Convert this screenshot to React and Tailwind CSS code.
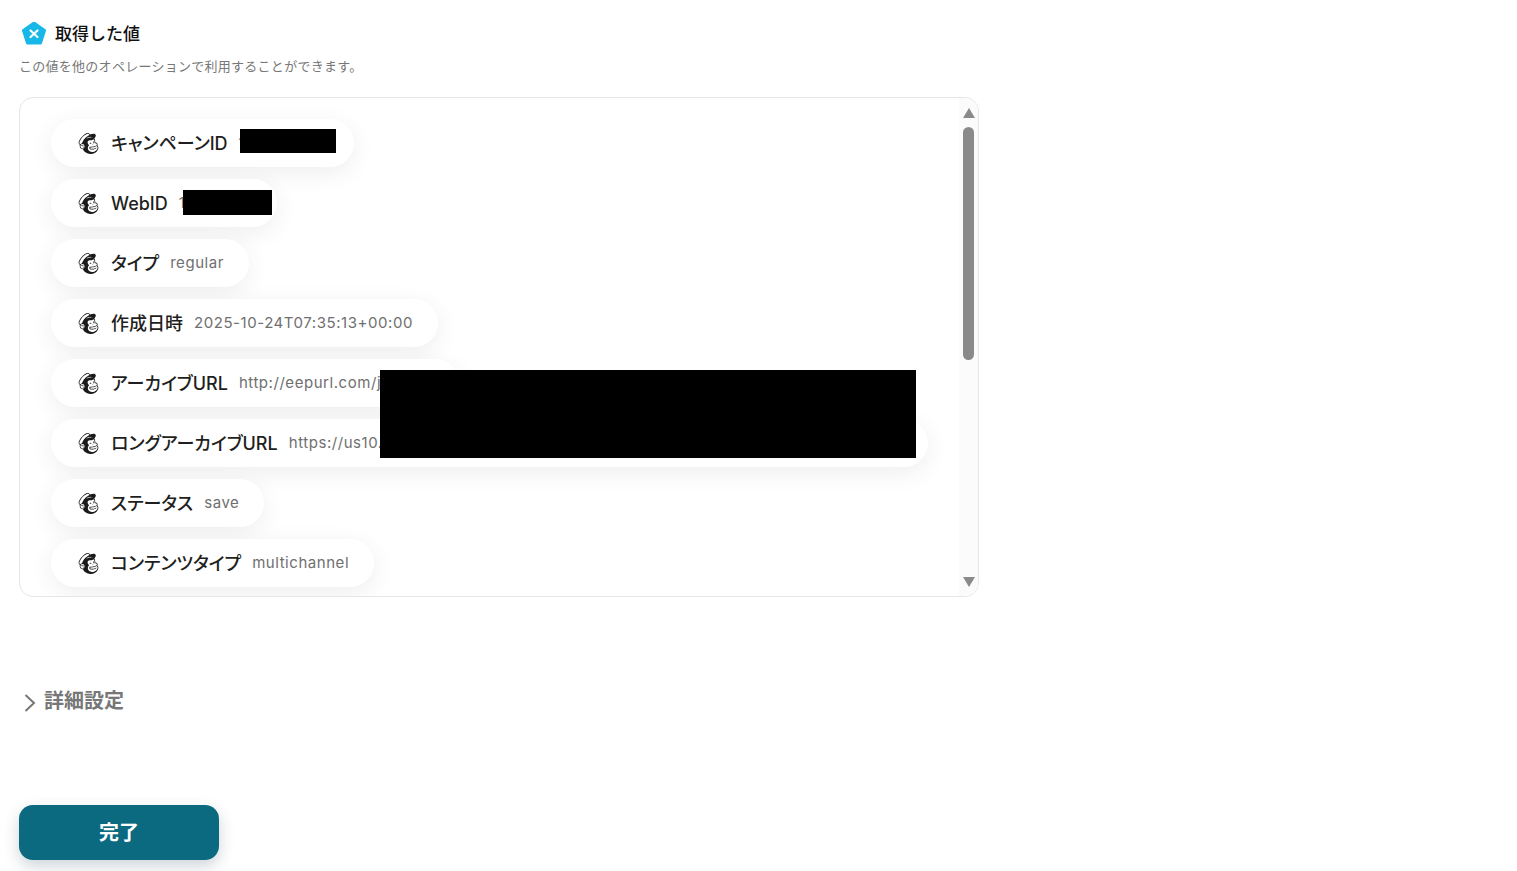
import React from 'react';
import { SiMailchimp } from 'react-icons/si';

const rows = [
  { label: 'キャンペーンID', value: '1001000100' },
  { label: 'WebID', value: '10010000' },
  { label: 'タイプ', value: 'regular' },
  { label: '作成日時', value: '2025-10-24T07:35:13+00:00' },
  { label: 'アーカイブURL', value: 'http://eepurl.com/jxxxxxx' },
  { label: 'ロングアーカイブURL', value: 'https://us10.campaign-archive.com/?u=000000000000000100&id=0000000000' },
  { label: 'ステータス', value: 'save' },
  { label: 'コンテンツタイプ', value: 'multichannel' },
];

const Pill = ({ label, value }) => (
  <div className="flex h-12 w-fit shrink-0 items-center whitespace-nowrap rounded-full bg-white pl-[27px] pr-[25px] shadow-[0_6px_24px_rgba(0,0,0,0.07)]">
    <SiMailchimp className="h-[21px] w-[21px] shrink-0 text-[#1a1a1a]" />
    <span className="ml-3 text-[18px] font-medium text-[#1f1f22] [font-feature-settings:'palt']">{label}</span>
    <span className="ml-[11px] text-[15px] tracking-[0.55px] text-[#6f6f6f]">{value}</span>
  </div>
);

const App = () => {
  return (
    <div className="relative min-h-[871px] bg-white pl-[19px] pt-[21px] [font-family:Inter,'Noto_Sans_CJK_JP',sans-serif]">
      <div className="flex h-[27px] items-center pl-0.5">
        <svg viewBox="0 1.5 26 26" className="h-[26px] w-[26px]">
          <path d="M13 2.5 23.5 10 19.5 22.5H6.5L2.5 10Z" fill="#17b8e8" stroke="#17b8e8" strokeWidth="3" strokeLinejoin="round" />
          <path d="M9.5 10l7 6.5M16.5 10l-7 6.5" stroke="#fff" strokeWidth="2.2" strokeLinecap="round" />
        </svg>
        <h2 className="ml-2 text-[17px] font-medium text-[#111]">取得した値</h2>
      </div>
      <p className="mt-2 text-[13px] leading-5 tracking-[0.27px] text-[#777]">この値を他のオペレーションで利用することができます。</p>

      <div className="relative mt-[21px] flex h-[500px] w-[960px] overflow-hidden rounded-[14px] border border-[#e6e6e6]">
        <div className="flex flex-1 flex-col gap-3 overflow-hidden pl-[31px] pt-[21px]">
          {rows.map((row) => (
            <Pill key={row.label} label={row.label} value={row.value} />
          ))}
        </div>
        <div className="flex w-[19px] shrink-0 flex-col items-center bg-[#fbfbfb] pt-[10px]">
          <div className="h-0 w-0 border-x-[6.5px] border-b-[10px] border-x-transparent border-b-[#8a8a8a]" />
          <div className="mt-[9px] h-[233px] w-[11px] rounded-full bg-[#8a8a8a]" />
          <div className="mt-[217px] h-0 w-0 border-x-[6.5px] border-t-[10px] border-x-transparent border-t-[#8a8a8a]" />
        </div>
      </div>

      <div className="mt-[88px] flex h-8 items-center">
        <svg viewBox="0 0 12 18" className="ml-[5px] mt-[3px] h-[18px] w-3" fill="none" stroke="#777" strokeWidth="2">
          <path d="M1.5 1 10 9 1.5 17" />
        </svg>
        <span className="ml-2 text-[20px] font-semibold text-[#777]">詳細設定</span>
      </div>

      <button className="mt-[88px] flex h-[55px] w-[200px] items-center justify-center rounded-[14px] bg-[#0b6980] text-[20px] font-bold text-white shadow-[0_6px_16px_rgba(0,40,60,0.2)]">
        完了
      </button>

      {/* 黒塗り部分 */}
      <div className="absolute left-[240px] top-[129px] h-6 w-24 bg-black" />
      <div className="absolute left-[183px] top-[190px] h-[25px] w-[89px] bg-black" />
      <div className="absolute left-[380px] top-[370px] h-[88px] w-[536px] bg-black" />
    </div>
  );
};

export default App;
